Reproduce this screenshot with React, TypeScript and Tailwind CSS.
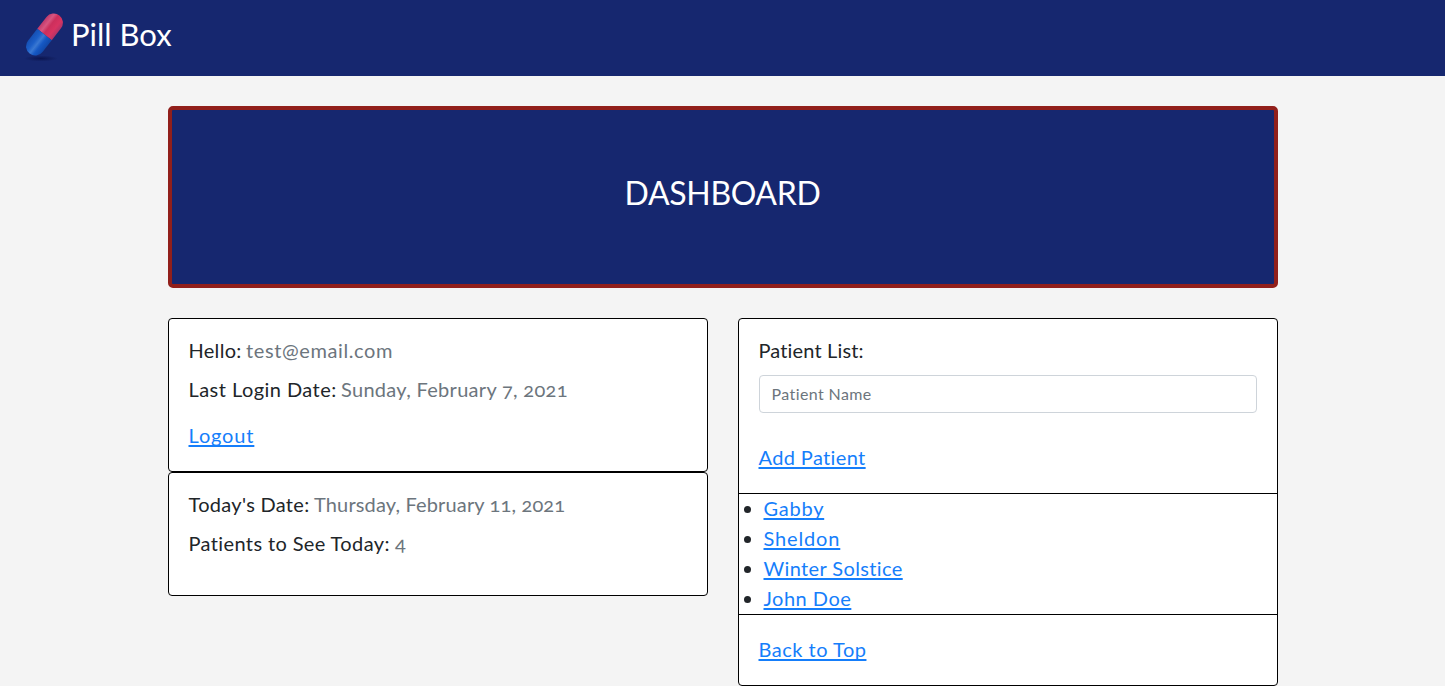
import type { ReactNode } from "react";

function PillIcon() {
  return (
    <svg width="40" height="50" viewBox="0 0 40 50" className="shrink-0">
      <defs>
        <linearGradient id="red" x1="0" x2="1" y1="0" y2="0">
          <stop offset="0" stopColor="#c03a6c" />
          <stop offset="0.25" stopColor="#d85580" />
          <stop offset="0.45" stopColor="#cc2f5c" />
          <stop offset="0.75" stopColor="#d83361" />
          <stop offset="1" stopColor="#b03468" />
        </linearGradient>
        <linearGradient id="blue" x1="0" x2="1" y1="0" y2="0">
          <stop offset="0" stopColor="#1550b4" />
          <stop offset="0.3" stopColor="#1c5fc8" />
          <stop offset="0.5" stopColor="#3a78d2" />
          <stop offset="0.7" stopColor="#1558c4" />
          <stop offset="1" stopColor="#1148a8" />
        </linearGradient>
        <radialGradient id="shade">
          <stop offset="0" stopColor="#080f45" stopOpacity="0.75" />
          <stop offset="1" stopColor="#080f45" stopOpacity="0" />
        </radialGradient>
      </defs>
      <ellipse cx="17" cy="46.5" rx="17" ry="3" fill="url(#shade)" />
      <g transform="translate(20.5 22.5) rotate(38)">
        <path d="M-9.2 0V-15A9.2 9.2 0 0 1 9.2 -15V0Z" fill="url(#red)" />
        <path d="M-9.2 0V15A9.2 9.2 0 0 0 9.2 15V0Z" fill="url(#blue)" />
      </g>
    </svg>
  );
}

function TextLink({ className, children }: { className: string; children: ReactNode }) {
  return (
    <a
      href="#"
      className={`text-[#157efb] underline decoration-2 underline-offset-[2px] [text-decoration-skip-ink:none] ${className}`}
    >
      {children}
    </a>
  );
}

function Row({ label, labelClass, value, valueClass }: { label: string; labelClass: string; value: string; valueClass: string }) {
  return (
    <p className="mb-[15px] flex h-6 items-center whitespace-nowrap">
      <span className={labelClass}>{label}</span>
      <span className={`text-[#6c757d] oldstyle-nums ${valueClass}`}>{value}</span>
    </p>
  );
}

const patients = [
  { name: "Gabby", className: "tracking-[0.75px]" },
  { name: "Sheldon", className: "tracking-[0.85px]" },
  { name: "Winter Solstice", className: "tracking-[0.38px]" },
  { name: "John Doe", className: "tracking-[0.5px]" },
];

export default function App() {
  return (
    <div className="h-[686px] overflow-hidden bg-[#f4f4f4] font-[Lato,sans-serif] text-xl leading-6 text-[#212529] [font-variant-ligatures:none]">
      <header className="flex h-[76px] items-start bg-[#16276f] pl-[24px] pt-[12px]">
        <PillIcon />
        <h1 className="ml-[7px] text-[31px] leading-[44px] text-white">Pill Box</h1>
      </header>
      <main className="mx-auto w-[1110px] pt-[30px]">
        <section className="flex h-[182px] items-center justify-center rounded-[5px] border-4 border-[#911f1b] bg-[#16276f] pb-[8px]">
          <h2 className="text-[32px] leading-[38px] tracking-[-0.35px] text-white">DASHBOARD</h2>
        </section>
        <div className="mt-[30px] grid grid-cols-2 items-start gap-[30px]">
          <div>
            <section className="h-[154px] rounded border border-black bg-white px-5 pt-[19px]">
              <Row label="Hello:" labelClass="w-[57.5px] tracking-[0.3px]" value="test@email.com" valueClass="tracking-[0.6px]" />
              <Row label="Last Login Date:" labelClass="w-[152.5px] tracking-[0.45px]" value="Sunday, February 7, 2021" valueClass="tracking-[0.3px]" />
              <div className="flex pt-[7px]"><TextLink className="tracking-[0.85px]">Logout</TextLink></div>
            </section>
            <section className="h-[124px] rounded border border-black bg-white px-5 pt-[19px]">
              <Row label="Today's Date:" labelClass="w-[125.5px] tracking-[0.3px]" value="Thursday, February 11, 2021" valueClass="tracking-[0.15px]" />
              <Row label="Patients to See Today:" labelClass="w-[206.5px] tracking-[0.38px]" value="4" valueClass="" />
            </section>
          </div>
          <section className="h-[368px] rounded border border-black bg-white">
            <div className="h-[174px] px-5 pt-[19px]">
              <h3 className="flex tracking-[0.15px]">Patient List:</h3>
              <input
                placeholder="Patient Name"
                className="mt-[13px] block h-[38px] w-full rounded border border-[#ced4da] bg-white px-3 pb-[2px] text-base tracking-[0.4px] placeholder:text-[#6c757d]"
              />
              <div className="flex pt-[32px]"><TextLink className="tracking-[0.37px]">Add Patient</TextLink></div>
            </div>
            <ul className="h-[122px] list-disc border-y border-black pl-[25px] leading-[30px]">
              {patients.map((p) => (
                <li key={p.name} className="relative -top-px"><TextLink className={p.className}>{p.name}</TextLink></li>
              ))}
            </ul>
            <div className="flex px-5 pt-[22px]"><TextLink className="tracking-[0.5px]">Back to Top</TextLink></div>
          </section>
        </div>
      </main>
    </div>
  );
}
